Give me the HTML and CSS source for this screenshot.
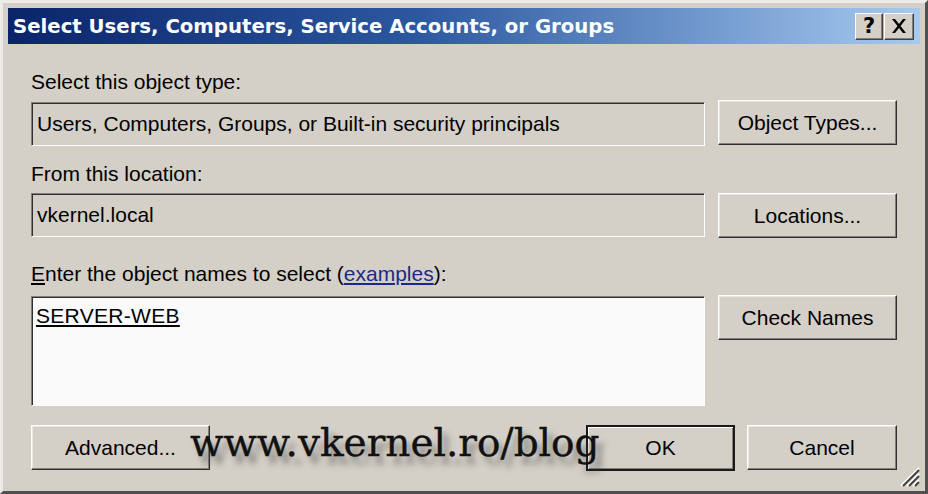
FILE: index.html
```html
<!DOCTYPE html>
<html>
<head>
<meta charset="utf-8">
<link rel="stylesheet" href="styles.css">
</head>
<body>
<div class="window">
  <div class="titlebar">
    <span class="title">Select Users, Computers, Service Accounts, or Groups</span>
    <div class="tbtns">
      <div class="tbtn help">?</div>
      <div class="tbtn close">
        <svg width="16" height="14" viewBox="0 0 16 14"><path d="M1 0 L4 0 L8 5 L12 0 L15 0 L9.5 7 L15 14 L12 14 L8 9 L4 14 L1 14 L6.5 7 Z" fill="#000"/></svg>
      </div>
    </div>
  </div>
  <div class="content">
    <div class="label l1">Select this object type:</div>
    <div class="row r1">
      <div class="field">Users, Computers, Groups, or Built-in security principals</div>
      <div class="btn">Object Types...</div>
    </div>
    <div class="label l2">From this location:</div>
    <div class="row r2">
      <div class="field">vkernel.local</div>
      <div class="btn">Locations...</div>
    </div>
    <div class="label l3"><span class="acc">E</span>nter the object names to select (<span class="link">examples</span>):</div>
    <div class="row r3">
      <div class="field area"><span class="name">SERVER-WEB</span></div>
      <div class="btn">Check Names</div>
    </div>
    <div class="bottom">
      <div class="btn adv">Advanced...</div>
      <div class="right">
        <div class="btn ok">OK</div>
        <div class="btn cancel">Cancel</div>
      </div>
    </div>
  </div>
  <div class="watermark">www.vkernel.ro/blog</div>
  <svg class="grip" width="22" height="22" viewBox="0 0 22 22">
    <g stroke-width="2">
      <line x1="21" y1="3" x2="3" y2="21" stroke="#fff"/>
      <line x1="21" y1="5" x2="5" y2="21" stroke="#404040"/>
      <line x1="21" y1="9" x2="9" y2="21" stroke="#fff"/>
      <line x1="21" y1="11" x2="11" y2="21" stroke="#404040"/>
      <line x1="21" y1="15" x2="15" y2="21" stroke="#fff"/>
      <line x1="21" y1="17" x2="17" y2="21" stroke="#404040"/>
    </g>
  </svg>
</div>
</body>
</html>
```
FILE: styles.css
```css
html, body {
  margin: 0;
  padding: 0;
  background: #d4d0c8;
}
.window {
  position: relative;
  width: 928px;
  height: 494px;
  box-sizing: border-box;
  background: #d4d0c8;
  border-top: 3px solid #ecebe8;
  border-left: 3px solid #ecebe8;
  border-right: 3px solid #505050;
  border-bottom: 3px solid #505050;
  padding: 5px 5px 0 5px;
  font-family: "Liberation Sans", Arial, sans-serif;
  color: #000;
  overflow: hidden;
}
.titlebar {
  height: 36px;
  background: linear-gradient(to right, #0a246a 0%, #2c58a0 45%, #a6caf0 100%);
  display: flex;
  align-items: center;
  justify-content: space-between;
  padding-left: 5px;
  padding-right: 6px;
}
.title {
  color: #fff;
  font-family: "DejaVu Sans", sans-serif;
  font-weight: bold;
  font-size: 19.7px;
}
.tbtns {
  display: flex;
  gap: 1px;
}
.tbtn {
  height: 27px;
  box-sizing: border-box;
  background: #d4d0c8;
  border-top: 1px solid #fff;
  border-left: 1px solid #fff;
  border-right: 1px solid #404040;
  border-bottom: 1px solid #404040;
  box-shadow: inset -1px -1px #808080;
  display: flex;
  align-items: center;
  justify-content: center;
}
.help {
  width: 28px;
  font-weight: bold;
  font-size: 21px;
  font-family: "DejaVu Sans", sans-serif;
}
.close {
  width: 30px;
}
.content {
  padding: 26px 23px 0 23px;
}
.label {
  font-size: 21px;
  line-height: 24px;
  height: 24px;
  white-space: nowrap;
}
.l2 { margin-top: 16px; }
.l3 { margin-top: 24px; }
.acc { text-decoration: underline; }
.link {
  color: #1a2a8c;
  text-decoration: underline;
}
.row {
  display: flex;
  gap: 13px;
  align-items: flex-start;
}
.r1 { margin-top: 8px; }
.r2 { margin-top: 7px; }
.r3 { margin-top: 10px; }
.field {
  width: 674px;
  height: 44px;
  box-sizing: border-box;
  border-top: 1px solid #808080;
  border-left: 1px solid #808080;
  border-right: 1px solid #fff;
  border-bottom: 1px solid #fff;
  box-shadow: inset 1px 1px #303030;
  padding: 0 5px;
  font-size: 21px;
  display: flex;
  align-items: center;
  white-space: nowrap;
}
.area {
  height: 110px;
  background: #fafafa;
  align-items: flex-start;
  padding-top: 7px;
  padding-left: 4px;
}
.name {
  text-decoration: underline;
  line-height: 24px;
  letter-spacing: 0.3px;
}
.btn {
  width: 179px;
  height: 45px;
  box-sizing: border-box;
  background: #d4d0c8;
  border-top: 1px solid #fff;
  border-left: 1px solid #fff;
  border-right: 1px solid #303030;
  border-bottom: 1px solid #303030;
  box-shadow: inset -1px -1px #808080, inset 1px 1px #e8e6e2;
  display: flex;
  align-items: center;
  justify-content: center;
  font-size: 21px;
  white-space: nowrap;
}
.r1 .btn { margin-top: -2px; }
.r3 .btn { margin-top: -1px; }
.bottom {
  margin-top: 19px;
  display: flex;
  justify-content: space-between;
  align-items: flex-start;
}
.right {
  display: flex;
  gap: 12px;
}
.ok {
  width: 149px;
  border: 2px solid #1a1a1a;
  box-shadow: inset 1px 1px #fff, inset -1px -1px #808080;
  height: 46px;
}
.cancel {
  width: 150px;
}
.watermark {
  position: absolute;
  left: 187px;
  top: 418px;
  font-family: "DejaVu Serif", "Liberation Serif", serif;
  font-size: 39px;
  line-height: 44px;
  color: #111;
  -webkit-text-stroke: 0.4px #111;
  text-shadow: 6px 8px 6px rgba(60, 60, 60, 0.55);
  white-space: nowrap;
}
.grip {
  position: absolute;
  right: 5px;
  bottom: 4px;
}
```
